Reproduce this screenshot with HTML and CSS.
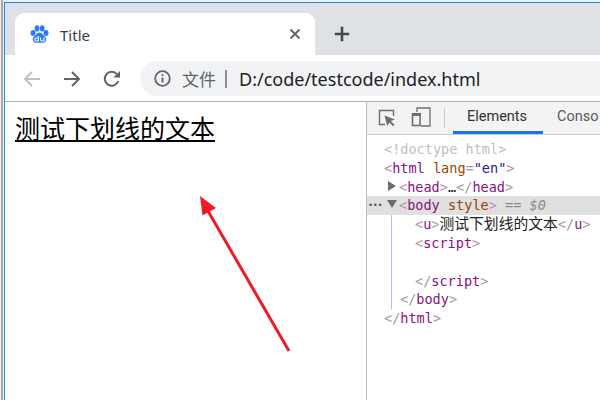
FILE: index.html
```html
<!DOCTYPE html>
<html lang="zh-CN">
<head>
<meta charset="utf-8">
<title>Title</title>
<link rel="stylesheet" href="styles.css">
</head>
<body>
<div class="window">
  <div class="tabstrip">
    <div class="tab">
      <svg class="favicon" width="19" height="19" viewBox="0 0 19 19"><g fill="#2b7bf2"><ellipse cx="3" cy="8" rx="2.500" ry="3"/><ellipse cx="7" cy="3.400" rx="2.400" ry="3.100"/><ellipse cx="12.200" cy="3.400" rx="2.400" ry="3.100"/><ellipse cx="16" cy="8" rx="2.500" ry="3"/><path d="M9.500 7.600c2.200 0 3 1.800 4.400 3 1.300 1.100 2.300 2.200 2.300 3.800 0 2.400-1.900 3.400-3.700 3.400H6.500c-1.800 0-3.700-1-3.700-3.400 0-1.600 1-2.700 2.300-3.800 1.400-1.200 2.200-3 4.400-3z"/></g><path d="M8.300 11v5H6.200a1.300 1.300 0 0 1-1.300-1.300v-.4c0-.8.600-1.300 1.300-1.300h2.100M10.600 12.600v2.200c0 .8.500 1.200 1.200 1.200h2.200v-3.400" fill="none" stroke="#fff" stroke-width="1.100"/></svg>
      <span class="tab-title">Title</span>
      <svg class="tab-close" width="12" height="12" viewBox="0 0 12 12"><path d="M1.500 1.500l9 9M10.500 1.500l-9 9" stroke="#5f6368" stroke-width="1.800" fill="none"/></svg>
    </div>
    <svg class="new-tab" width="16" height="16" viewBox="0 0 16 16"><path d="M8 .8v14.400M.8 8h14.400" stroke="#45494e" stroke-width="2.600" fill="none"/></svg>
  </div>
  <div class="toolbar">
    <div class="nav">
      <svg width="18" height="18" viewBox="0 0 18 18"><path d="M17 9H2M9 2L2 9l7 7" stroke="#bcbfc3" stroke-width="2" fill="none"/></svg>
      <svg width="18" height="18" viewBox="0 0 18 18"><path d="M1 9h15M9 2l7 7-7 7" stroke="#5f6368" stroke-width="2" fill="none"/></svg>
      <svg width="18" height="18" viewBox="0 0 18 18"><path d="M15.300 11.200A7 7 0 1 1 14 4.100" stroke="#5f6368" stroke-width="2" fill="none"/><path d="M17 1v6.600h-6.600z" fill="#5f6368"/></svg>
    </div>
    <div class="omnibox">
      <svg width="17" height="17" viewBox="0 0 17 17"><circle cx="8.500" cy="8.500" r="7.300" stroke="#5f6368" stroke-width="1.800" fill="none"/><path d="M8.500 7.400v5M8.500 4.200v1.800" stroke="#5f6368" stroke-width="1.900" fill="none"/></svg>
      <span class="scheme">文件</span>
      <span class="divider"></span>
      <span class="url">D:/code/testcode/index.html</span>
    </div>
  </div>
  <div class="content">
    <main class="page"><u>测试下划线的文本</u></main>
    <aside class="devtools">
      <div class="dt-bar">
        <svg class="dt-inspect" width="18" height="18" viewBox="0 0 18 18"><path d="M7 15.500H1.500v-14h14V7" stroke="#6e6e6e" stroke-width="1.400" fill="none"/><path d="M6.500 6.500l10.500 4-4.200 1.600 3.700 3.700-1.400 1.400-3.700-3.700L9.200 17z" fill="#6e6e6e"/></svg>
        <svg class="dt-device" width="20" height="20" viewBox="0 0 20 20"><path d="M6 5V1h13v18H10" stroke="#6e6e6e" stroke-width="1.300" fill="none"/><rect x="1.500" y="7.500" width="7.500" height="11" fill="none" stroke="#6e6e6e" stroke-width="1.600"/><path d="M1 6h9v3H1z" fill="#6e6e6e"/></svg>
        <span class="dt-sep"></span>
        <span class="dt-tab dt-tab-active">Elements</span>
        <span class="dt-tab">Conso</span>
      </div>
      <div class="tree">
        <div class="row lvl0 dim">&lt;!doctype html&gt;</div>
        <div class="row lvl0"><span class="p">&lt;</span><span class="t">html</span> <span class="a">lang</span><span class="p">=</span><span class="v">"en"</span><span class="p">&gt;</span></div>
        <div class="row lvl1"><i class="tri-r"></i><span class="p">&lt;</span><span class="t">head</span><span class="p">&gt;</span>…<span class="p">&lt;/</span><span class="t">head</span><span class="p">&gt;</span></div>
        <div class="row lvl1 selected"><span class="dots">•••</span><i class="tri-d"></i><span class="p">&lt;</span><span class="t">body</span> <span class="a">style</span><span class="p">&gt;</span> <span class="eq">== <em>$0</em></span></div>
        <div class="guide">
          <div class="row lvl2"><span class="p">&lt;</span><span class="t">u</span><span class="p">&gt;</span><span class="cjk">测试下划线的文本</span><span class="p">&lt;/</span><span class="t">u</span><span class="p">&gt;</span></div>
          <div class="row lvl2"><span class="p">&lt;</span><span class="t">script</span><span class="p">&gt;</span></div>
          <div class="row lvl2"></div>
          <div class="row lvl2"><span class="p">&lt;/</span><span class="t">script</span><span class="p">&gt;</span></div>
          <div class="row lvl1c"><span class="p">&lt;/</span><span class="t">body</span><span class="p">&gt;</span></div>
        </div>
        <div class="row lvl0"><span class="p">&lt;/</span><span class="t">html</span><span class="p">&gt;</span></div>
      </div>
    </aside>
  </div>
</div>
<svg class="arrow" width="600" height="400" viewBox="0 0 600 400"><path d="M289 351L208 211" stroke="#ed1c24" stroke-width="3" fill="none"/><path d="M200 196l2.500 19.500 13.500-7.500z" fill="#ed1c24"/></svg>
</body>
</html>
```
FILE: styles.css
```css
* { box-sizing: border-box; }
html, body { margin: 0; height: 100%; overflow: hidden; }
body {
  width: 600px; height: 400px; position: relative;
  background: #f0f0f0;
  padding: 2px 0 0 4px;
  font-family: "Noto Sans", "Noto Sans CJK SC", sans-serif;
  box-shadow: inset 1px 0 0 #f0f0f0, inset 3px 0 0 #a8a8a8;
}
.window {
  height: 398px; display: flex; flex-direction: column;
  border-top: 1px solid #1e88e5; border-left: 1px solid #1e88e5;
  background: #fff;
}
.tabstrip {
  height: 52px; flex: none; background: #dee1e6;
  display: flex; align-items: flex-end; padding-left: 10px;
}
.tab {
  width: 300px; height: 42px; background: #fff;
  border-radius: 9px 9px 0 0;
  display: flex; align-items: center; padding: 0 14px 0 15px;
}
.favicon { flex: none; margin-right: 11px; }
.tab-title { font-size: 15px; color: #3c4043; flex: 1; padding-top: 1px; }
.new-tab { margin: 0 0 13px 19px; }
.toolbar {
  height: 47px; flex: none; background: #fff;
  border-bottom: 1px solid #b0b0b0;
  display: flex; align-items: flex-start; padding: 6px 0 0 18px;
}
.nav { display: flex; gap: 22px; align-items: center; height: 35px; width: 117px; flex: none; }
.omnibox {
  flex: 1; height: 35px; background: #f1f3f4;
  border-radius: 18px 0 0 18px;
  display: flex; align-items: center; padding-left: 14px;
  color: #5f6368;
}
.scheme { font-size: 17px; margin-left: 11px; }
.divider { width: 2px; height: 18px; background: #8a8d91; margin: 0 12px 0 9px; }
.url { font-family: "Noto Sans", sans-serif; font-size: 18px; color: #202124; white-space: nowrap; }
.content { flex: 1; display: flex; min-height: 0; }
.page {
  width: 361px; flex: none; padding: 7px 0 0 10px;
  font-size: 25px; line-height: 36px; color: #000;
  font-family: "Noto Sans CJK SC", sans-serif;
}
.page u { text-decoration-thickness: 2px; text-underline-offset: 2px; }
.devtools { flex: 1; border-left: 1px solid #bdbdbd; min-width: 0; overflow: hidden; }
.dt-bar {
  height: 33px; background: #f3f3f3; border-bottom: 1px solid #ccc;
  display: flex; align-items: center; padding-left: 11px;
  white-space: nowrap;
}
.dt-inspect { flex: none; margin-right: 15px; }
.dt-device { flex: none; margin-right: 13px; margin-bottom: 2px; }
.dt-sep { width: 1px; height: 20px; background: #ccc; flex: none; margin-right: 8px; }
.dt-tab { font-family: Roboto, sans-serif; font-size: 14.5px; color: #5a5a5a; padding: 0 15px 0 14px; height: 32px; line-height: 30px; flex: none; }
.dt-tab + .dt-tab { padding-right: 0; }
.dt-tab-active { color: #333; border-bottom: 3px solid #1a73e8; padding-right: 16px; }
.tree {
  padding-top: 5px; font-family: "DejaVu Sans Mono", "Noto Sans CJK SC", monospace;
  font-size: 13.55px; color: #222;
}
.row { height: 18.8px; line-height: 18.8px; white-space: nowrap; position: relative; }
.lvl0 { padding-left: 17px; }
.lvl1 { padding-left: 32px; }
.lvl2 { padding-left: 23px; }
.lvl1c { padding-left: 8px; }
.dim { color: #c0c0c0; }
.p { color: #a894a6; }
.t { color: #881280; }
.a { color: #994500; }
.v { color: #1a1aa6; }
.eq { color: #8a8a8a; }
.eq em { font-style: italic; }
.cjk { font-family: "Noto Sans CJK SC", sans-serif; font-size: 14.8px; line-height: 16px; color: #222; }
.selected { background: #e0e0e0; }
.dots { position: absolute; left: 2px; top: 0; font-size: 9px; letter-spacing: 1.600px; color: #555; font-family: "Liberation Sans", sans-serif; }
.tri-r, .tri-d { position: absolute; width: 0; height: 0; border-style: solid; }
.tri-r { left: 21px; top: 3px; border-width: 5px 0 5px 8px; border-color: transparent transparent transparent #6e6e6e; }
.tri-d { left: 20px; top: 4px; border-width: 8px 5px 0 5px; border-color: #6e6e6e transparent transparent transparent; }
.guide { margin-left: 24px; border-left: 1px solid #a9c4e4; }
.arrow { position: absolute; left: 0; top: 0; pointer-events: none; }
```
